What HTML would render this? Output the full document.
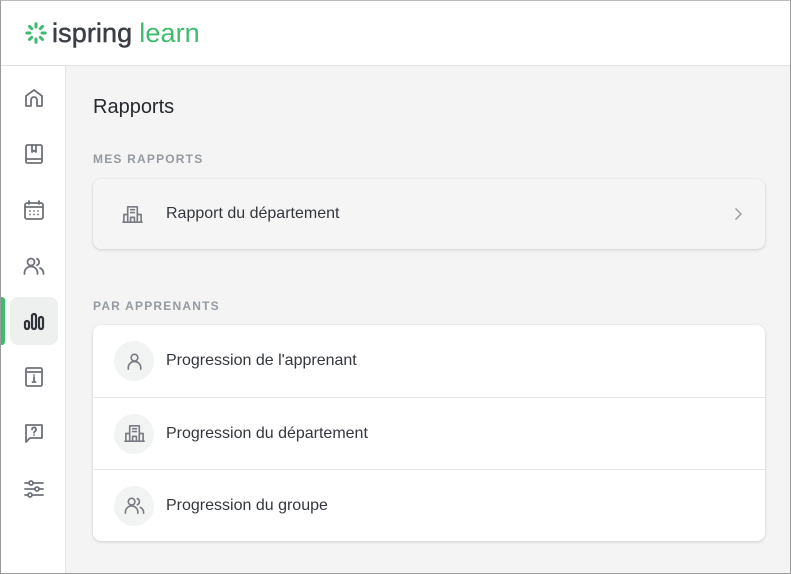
<!DOCTYPE html>
<html><head><meta charset="utf-8">
<style>
*{box-sizing:border-box;margin:0;padding:0}
html,body{width:791px;height:574px;overflow:hidden;background:#fff}
body{font-family:"Liberation Sans",Arial,sans-serif;position:relative}
.frame{position:absolute;left:0;top:0;width:791px;height:574px;border:1px solid #9a9a9a;border-top-color:#bbb}
.header{position:absolute;left:1px;top:1px;width:789px;height:65px;background:#fff;border-bottom:1px solid #e2e2e2;box-shadow:0 1px 2px rgba(0,0,0,.06)}
.logo{position:absolute;left:24px;top:17px;display:flex;align-items:center}
.logo .w1{font-size:27px;color:#3b3f45;margin-left:5px;letter-spacing:0.1px;line-height:30px;-webkit-text-stroke:0.5px #3b3f45}
.logo .w2{font-size:27px;color:#3dbc6e;margin-left:7px;letter-spacing:0.1px;line-height:30px}
.side{position:absolute;left:1px;top:66px;width:65px;height:507px;background:#fff;border-right:1px solid #e4e4e4}
.main{position:absolute;left:66px;top:66px;width:724px;height:507px;background:#f4f4f4}
.ic{position:absolute;left:9px;width:48px;height:48px;display:flex;align-items:center;justify-content:center}
.ic svg{width:24px;height:24px;fill:none;stroke:#6e7278;stroke-width:1.8;stroke-linecap:round;stroke-linejoin:round}
.ic.act{background:#eef0f0;border-radius:8px}
.ic.act svg{stroke:#2f3337;stroke-width:2.2}
.bar{position:absolute;left:0;top:231px;width:4px;height:48px;background:#3dbc6e;border-radius:0 3px 3px 0}
h1{position:absolute;left:27px;top:30px;font-size:20px;font-weight:normal;color:#26292d}
.lab{position:absolute;left:27px;font-size:12px;font-weight:bold;color:#949aa0;letter-spacing:1.2px}
.card{position:absolute;left:27px;width:672px;border-radius:8px;box-shadow:0 1px 3px rgba(0,0,0,.14),0 0 1px rgba(0,0,0,.08)}
.row{height:72px;display:flex;align-items:center;font-size:16px;color:#33373c;position:relative}
.row+.row{border-top:1px solid #e6e6e6}
.circ{width:40px;height:40px;border-radius:50%;background:#f2f3f3;margin-left:21px;margin-right:12px;display:flex;align-items:center;justify-content:center}
.circ svg,.plain svg{width:23px;height:23px;fill:none;stroke:#787c82;stroke-width:1.7;stroke-linecap:round;stroke-linejoin:round}
</style></head><body>
<div class="header">
  <div class="logo">
    <svg width="22" height="22" viewBox="0 0 22 22">
      <g stroke="#3dbc6e" stroke-width="3" stroke-linecap="round">
        <path d="M11 1.8v3.2M11 17v3.2M1.8 11h3.2M17 11h3.2M4.5 4.5l2.2 2.2M15.3 15.3l2.2 2.2M17.5 4.5l-2.2 2.2M6.7 15.3l-2.2 2.2"/>
      </g>
    </svg>
    <span class="w1">ispring</span><span class="w2">learn</span>
  </div>
</div>
<div class="side">
  <div class="ic" style="top:8px"><svg viewBox="0 0 24 24"><path d="M4 20V10l8-6 8 6v10h-5v-6a3 3 0 0 0-6 0v6z"/></svg></div>
  <div class="ic" style="top:64px"><svg viewBox="0 0 24 24"><rect x="4" y="3" width="16" height="18" rx="1.5"/><path d="M4 17h16M10 3v7l2-1.5 2 1.5V3"/></svg></div>
  <div class="ic" style="top:120px"><svg viewBox="0 0 24 24"><rect x="3" y="5" width="18" height="16" rx="2"/><path d="M3 9h18M7 3v3M17 3v3M8 13h.01M12 13h.01M16 13h.01M8 16.5h.01M12 16.5h.01M16 16.5h.01"/></svg></div>
  <div class="ic" style="top:176px"><svg viewBox="0 0 24 24"><circle cx="9" cy="8" r="3.5"/><path d="M2.5 20v-1a6.5 6.5 0 0 1 13 0v1M15 4.8a3.5 3.5 0 0 1 0 6.4M18 14a6 6 0 0 1 3.5 5.5V20"/></svg></div>
  <div class="bar"></div>
  <div class="ic act" style="top:231px"><svg viewBox="0 0 24 24"><rect x="3" y="12" width="4" height="8" rx="2"/><rect x="10" y="5" width="4" height="15" rx="2"/><rect x="17" y="8" width="4" height="12" rx="2"/></svg></div>
  <div class="ic" style="top:287px"><svg viewBox="0 0 24 24"><rect x="4" y="3" width="16" height="18" rx="1.5"/><path d="M4 7h16M12 12v5M12 10h.01M10.5 17h3"/></svg></div>
  <div class="ic" style="top:343px"><svg viewBox="0 0 24 24"><path d="M4 4h16v13H8l-4 4z"/><path d="M10 8.5a2 2 0 1 1 3 1.7c-.7.4-1 .8-1 1.5M12 14h.01"/></svg></div>
  <div class="ic" style="top:399px"><svg viewBox="0 0 24 24"><path d="M3 6h18M3 12h18M3 18h18"/><circle cx="9" cy="6" r="2" fill="#fff"/><circle cx="15" cy="12" r="2" fill="#fff"/><circle cx="8" cy="18" r="2" fill="#fff"/></svg></div>
</div>
<div class="main">
  <h1>Rapports</h1>
  <div class="lab" style="top:86px">MES RAPPORTS</div>
  <div class="card" style="top:113px;height:70px;background:#f5f5f5">
    <div class="row" style="height:70px">
      <span class="plain" style="margin-left:28px;margin-right:22px;display:flex"><svg viewBox="0 0 24 24"><path d="M7 20V4h10v16M3 20v-8h4M21 20v-8h-4M2 20h20M10 7h4M10 10h4M10 20v-5h4v5"/></svg></span>
      Rapport du département
      <svg style="position:absolute;right:20px;top:28px" width="14" height="14" viewBox="0 0 14 14"><path d="M5 2l5 5-5 5" fill="none" stroke="#a2a5a9" stroke-width="1.6" stroke-linecap="round"/></svg>
    </div>
  </div>
  <div class="lab" style="top:233px">PAR APPRENANTS</div>
  <div class="card" style="top:259px;background:#fff">
    <div class="row"><div class="circ"><svg viewBox="0 0 24 24"><circle cx="12" cy="8" r="3.5"/><path d="M5.5 20v-1.5a6.5 6.5 0 0 1 13 0V20"/></svg></div>Progression de l'apprenant</div>
    <div class="row"><div class="circ"><svg viewBox="0 0 24 24"><path d="M7 20V4h10v16M3 20v-8h4M21 20v-8h-4M2 20h20M10 7h4M10 10h4M10 20v-5h4v5"/></svg></div>Progression du département</div>
    <div class="row"><div class="circ"><svg viewBox="0 0 24 24"><circle cx="9" cy="8" r="3.5"/><path d="M2.5 20v-1a6.5 6.5 0 0 1 13 0v1M15 4.8a3.5 3.5 0 0 1 0 6.4M18 14a6 6 0 0 1 3.5 5.5V20"/></svg></div>Progression du groupe</div>
  </div>
</div>
<div class="frame"></div>
</body></html>
